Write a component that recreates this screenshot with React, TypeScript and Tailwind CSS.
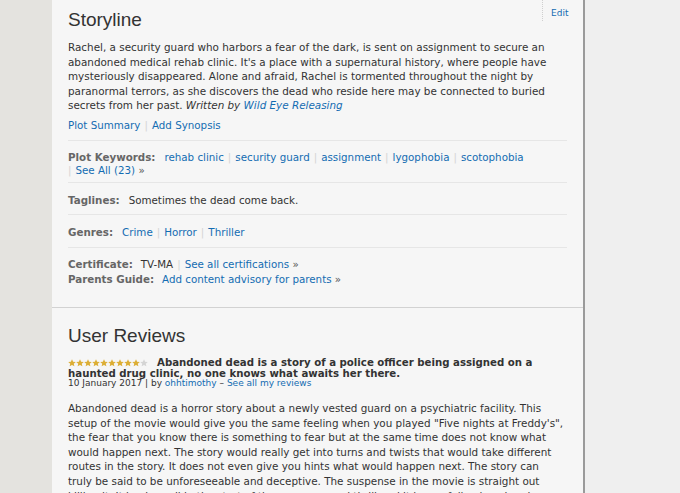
import React from "react";

const link = "text-[#136cb2]";
const label = "font-bold text-[#666]";

function Pipe() {
  return <span className="px-[4px] text-[#d4d4d4]">|</span>;
}

function Star({ on }: { on: boolean }) {
  return (
    <svg width="8" height="8" viewBox="0 0 10 10" className="shrink-0">
      <path
        d="M5 0.4l1.4 3 3.3.3-2.5 2.2.8 3.3L5 7.5 2 9.2l.8-3.3L.3 3.7l3.3-.3z"
        fill={on ? "#dcae35" : "#d4d4d4"}
      />
    </svg>
  );
}

function LinkList({ items }: { items: string[] }) {
  return (
    <>
      {items.map((item, i) => (
        <React.Fragment key={item}>
          {i > 0 && <Pipe />}
          <a className={link}>{item}</a>
        </React.Fragment>
      ))}
    </>
  );
}

export default function App() {
  return (
    <div
      className="flex h-[493px] overflow-hidden bg-[#e4e3df] text-[#333]"
      style={{ fontFamily: '"DejaVu Sans", Verdana, sans-serif' }}
    >
      <div className="w-[52px] shrink-0" />

      <div className="w-[533px] shrink-0 border-r-2 border-[#9a9a9a] bg-[#f6f6f6]">
        {/* Storyline */}
        <section className="border-b border-[#d2d2d2] pb-[20px]">
          <div className="flex items-start justify-between">
            <h2
              className="ml-4 pt-[8px] text-[19px] leading-[24px] text-[#333]"
              style={{ fontFamily: '"Liberation Sans", Arial, sans-serif' }}
            >
              Storyline
            </h2>
            <div className="h-[21px] w-[41px] border-l border-dotted border-[#cfcfcf] pl-[8px] pt-[7px] text-[9px] leading-[12px]">
              <a className={link}>Edit</a>
            </div>
          </div>

          <div className="px-4 text-[10.3px]">
            <p className="mt-[8px] text-[10.4px] leading-[14.5px]">
              Rachel, a security guard who harbors a fear of the dark, is sent on assignment to secure an
              <br />
              abandoned medical rehab clinic. It's a place with a supernatural history, where people have
              <br />
              mysteriously disappeared. Alone and afraid, Rachel is tormented throughout the night by
              <br />
              paranormal terrors, as she discovers the dead who reside here may be connected to buried
              <br />
              secrets from her past. <em>Written by</em> <em className={link}>Wild Eye Releasing</em>
            </p>

            <div className="border-b border-[#e6e6e6] pt-[5px] pb-[8px] leading-[14.5px]">
              <a className={link}>Plot Summary</a>
              <Pipe />
              <a className={link}>Add Synopsis</a>
            </div>

            <div className="border-b border-[#e6e6e6] pt-[10px] pb-[6px] leading-[12.5px]">
              <span className={`mr-[9px] ${label}`}>Plot Keywords:</span>
              <LinkList
                items={["rehab clinic", "security guard", "assignment", "lygophobia", "scotophobia"]}
              />
              <br />
              <span className="pr-[4px] text-[#d4d4d4]">|</span>
              <a className={link}>See All (23)</a> <span className="text-[#555]">»</span>
            </div>

            <div className="border-b border-[#e6e6e6] pt-[10px] pb-[7px] leading-[14px]">
              <span className={`mr-[9px] ${label}`}>Taglines:</span>
              Sometimes the dead come back.
            </div>

            <div className="border-b border-[#e6e6e6] pt-[10px] pb-[8px] leading-[14px]">
              <span className={`mr-[9px] ${label}`}>Genres:</span>
              <LinkList items={["Crime", "Horror", "Thriller"]} />
            </div>

            <div className="pt-[9px] leading-[15px]">
              <div>
                <span className={`mr-[8px] ${label}`}>Certificate:</span>
                TV-MA
                <Pipe />
                <a className={link}>See all certifications</a> <span className="text-[#555]">»</span>
              </div>
              <div>
                <span className={`mr-[8px] ${label}`}>Parents Guide:</span>
                <a className={link}>Add content advisory for parents</a>{" "}
                <span className="text-[#555]">»</span>
              </div>
            </div>
          </div>
        </section>

        {/* User Reviews */}
        <section className="px-4 pt-[16px]">
          <h2
            className="text-[19px] leading-[24px] text-[#333]"
            style={{ fontFamily: '"Liberation Sans", Arial, sans-serif' }}
          >
            User Reviews
          </h2>

          <p className="mt-[10px] text-[10.2px] font-bold leading-[10.5px] text-[#333]">
            <span className="mr-[9px] inline-flex items-center align-[-1px]">
              {Array.from({ length: 10 }).map((_, i) => (
                <Star key={i} on={i < 9} />
              ))}
            </span>
            Abandoned dead is a story of a police officer being assigned on a
            <br />
            haunted drug clinic, no one knows what awaits her there.
          </p>
          <div className="text-[9px] leading-[9px]">
            10 January 2017 | by <a className={link}>ohhtimothy</a> –{" "}
            <a className={link}>See all my reviews</a>
          </div>

          <p className="mt-[13px] text-[10.4px] leading-[14.6px]">
            Abandoned dead is a horror story about a newly vested guard on a psychiatric facility. This
            <br />
            setup of the movie would give you the same feeling when you played "Five nights at Freddy's",
            <br />
            the fear that you know there is something to fear but at the same time does not know what
            <br />
            would happen next. The story would really get into turns and twists that would take different
            <br />
            routes in the story. It does not even give you hints what would happen next. The story can
            <br />
            truly be said to be unforeseeable and deceptive. The suspense in the movie is straight out
            <br />
            killing it. It hooks well in the start of the suspense and thrill and it is carefully placed and
          </p>
        </section>
      </div>

      <div className="flex-1 bg-[#efefef]" />
    </div>
  );
}
